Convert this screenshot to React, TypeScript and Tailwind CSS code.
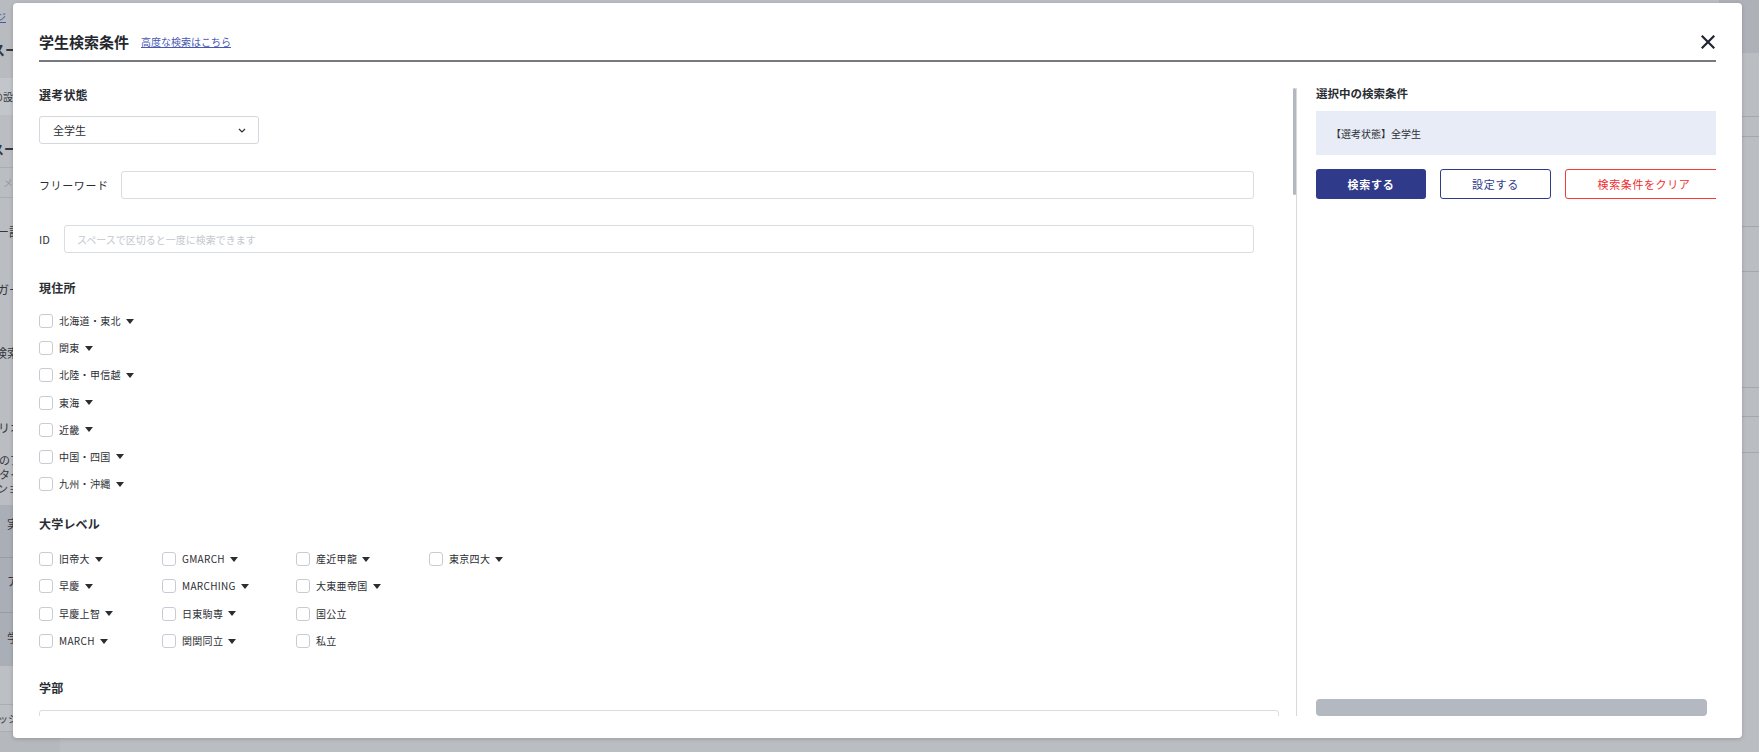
import React from 'react';

const regions = ['北海道・東北', '関東', '北陸・甲信越', '東海', '近畿', '中国・四国', '九州・沖縄'];

const levels: { label: string; caret: boolean }[][] = [
    [
        { label: '旧帝大', caret: true },
        { label: 'GMARCH', caret: true },
        { label: '産近甲龍', caret: true },
        { label: '東京四大', caret: true },
    ],
    [
        { label: '早慶', caret: true },
        { label: 'MARCHING', caret: true },
        { label: '大東亜帝国', caret: true },
    ],
    [
        { label: '早慶上智', caret: true },
        { label: '日東駒専', caret: true },
        { label: '国公立', caret: false },
    ],
    [
        { label: 'MARCH', caret: true },
        { label: '関関同立', caret: true },
        { label: '私立', caret: false },
    ],
];

function Caret() {
    return (
        <svg width="8" height="5" viewBox="0 0 8 5" className="ml-[5px] fill-[#2b2e33]">
            <path d="M0 0h8L4 5z" />
        </svg>
    );
}

function Check({ label, caret = true }: { label: string; caret?: boolean }) {
    return (
        <div className="flex h-[14px] items-center">
            <span className="h-[14px] w-[14px] rounded-[3px] border border-[#c8ccd2] bg-white" />
            <span className="ml-[6px] text-[10px] leading-none tracking-[0.3px] text-[#2b2e33]">{label}</span>
            {caret && <Caret />}
        </div>
    );
}

function SectionLabel({ children, className = '' }: { children: React.ReactNode; className?: string }) {
    return (
        <p className={`h-[14px] text-[12px] leading-[14px] font-semibold tracking-[0.2px] text-[#2a2d33] ${className}`}>
            {children}
        </p>
    );
}

function PageBehind() {
    return (
        <div className="flex h-[752px] w-[1759px] overflow-hidden bg-[#babdc2] text-[#34373d]">
            <div className="flex w-[60px] flex-col overflow-hidden whitespace-nowrap">
                <div className="flex h-[78px] flex-col bg-[#b8bbc0]">
                    <span className="mt-[10px] -ml-[4px] text-[10px] leading-[14px] text-[#4b5a9a] underline">ジ</span>
                    <span className="mt-[16px] -ml-[9px] text-[14px] leading-[18px] font-bold">スー</span>
                </div>
                <div className="flex h-[37px] items-center bg-[#c2c5c9]">
                    <span className="-ml-[7px] text-[10px]">の設定</span>
                </div>
                <div className="flex h-[53px] items-end border-b border-[#a9adb4] pb-[9px]">
                    <span className="-ml-[9px] text-[13px] leading-[18px] font-bold">スー</span>
                </div>
                <div className="flex h-[30px] items-center border-b border-[#a9adb4]">
                    <span className="ml-[3px] text-[10px] text-[#979ba3]">メー</span>
                </div>
                <div className="flex h-[307px] flex-col text-[12px] leading-[14px]">
                    <span className="mt-[27px] -ml-[3px]">ー設</span>
                    <span className="mt-[44px] -ml-[3px]">ガー</span>
                    <span className="mt-[49px] -ml-[5px]">検索</span>
                    <span className="mt-[61px] -ml-[2px]">リオ</span>
                    <span className="mt-[18px] -ml-[1px] text-[11px]">のア</span>
                    <span className="-ml-[1px] text-[11px]">タイ</span>
                    <span className="-ml-[3px] text-[11px]">ンョ</span>
                </div>
                <div className="flex h-[53px] border-b border-[#979ca5] bg-[#aaaeb6] pt-[10px] text-[12px]">
                    <span className="ml-[7px]">実</span>
                </div>
                <div className="flex h-[55px] border-b border-[#979ca5] bg-[#aaaeb6] pt-[14px] text-[12px]">
                    <span className="ml-[7px]">ア</span>
                </div>
                <div className="flex h-[53px] bg-[#aaaeb6] pt-[16px] text-[12px]">
                    <span className="ml-[7px]">学</span>
                </div>
                <div className="h-[39px] border-b border-[#a9adb4] bg-[#bcbfc4]" />
                <div className="flex h-[27px] items-center border-b border-[#a9adb4] bg-[#bcbfc4]">
                    <span className="-ml-[2px] text-[10px]">ッシ</span>
                </div>
                <div className="flex-1 bg-[#b5b8bd]" />
            </div>
            <div className="flex-1" />
            <div className="flex w-[40px] flex-col">
                <div className="h-[53px] bg-[#aeb1b7]" />
                <div className="h-[64px] border-b border-[#a3a7ae]" />
                <div className="h-[20px] border-b border-[#a3a7ae]" />
                <div className="h-[90px] border-b border-[#a3a7ae]" />
                <div className="h-[45px] border-b border-[#a3a7ae]" />
                <div className="h-[116px] border-b border-[#a3a7ae]" />
                <div className="h-[29px] border-b border-[#a3a7ae]" />
                <div className="h-[36px] border-b border-[#a3a7ae]" />
                <div className="flex-1" />
            </div>
        </div>
    );
}

export default function App() {
    return (
        <div className="relative h-[752px] w-[1759px] overflow-hidden font-['Noto_Sans_CJK_JP','Noto_Sans',sans-serif]">
            <PageBehind />

            <div className="absolute top-[3px] left-[13px] flex h-[735px] w-[1729px] flex-col rounded-[4px] bg-white px-[26px] shadow-[0_1px_4px_rgba(0,0,0,0.18)]">
                <header className="border-b-2 border-[#76797f] pt-[30px] pb-[9px]">
                    <div className="flex h-[18px] items-center">
                        <h1 className="text-[15px] leading-[18px] font-bold text-[#24272d]">学生検索条件</h1>
                        <a href="#" className="ml-[12px] text-[10px] leading-[14px] text-[#4658b3] underline">
                            高度な検索はこちら
                        </a>
                        <button className="mr-[1px] ml-auto text-[#1f2530]" aria-label="close">
                            <svg width="14" height="14" viewBox="0 0 14 14" fill="none" stroke="currentColor" strokeWidth="2.2" strokeLinecap="square">
                                <path d="M1.5 1.5l11 11M12.5 1.5l-11 11" />
                            </svg>
                        </button>
                    </div>
                </header>

                <div className="flex h-[654px]">
                    <section className="flex pt-[26px]">
                        <div className="w-[1253px] overflow-hidden">
                            <SectionLabel>選考状態</SectionLabel>
                            <div className="mt-[14px] flex h-[28px] w-[220px] items-center justify-between rounded-[3px] border border-[#d5d8dd] pr-[12px] pl-[13px]">
                                <span className="text-[11px] text-[#2b2e33]">全学生</span>
                                <svg width="8" height="5" viewBox="0 0 8 5" fill="none" stroke="#2b2e33" strokeWidth="1.2">
                                    <path d="M1 1l3 3 3-3" />
                                </svg>
                            </div>

                            <div className="mt-[27px] flex h-[28px] w-[1215px] items-center">
                                <span className="w-[82px] text-[11px] tracking-[0.6px] text-[#2b2e33]">フリーワード</span>
                                <div className="h-[28px] flex-1 rounded-[3px] border border-[#d9dce1]" />
                            </div>

                            <div className="mt-[26px] flex h-[28px] w-[1215px] items-center">
                                <span className="w-[25px] text-[11px] text-[#2b2e33]">ID</span>
                                <div className="flex h-[28px] flex-1 items-center rounded-[3px] border border-[#d9dce1] pl-[12px]">
                                    <span className="text-[10px] text-[#c3c7cd]">スペースで区切ると一度に検索できます</span>
                                </div>
                            </div>

                            <SectionLabel className="mt-[28px]">現住所</SectionLabel>
                            <div className="mt-[19px] flex flex-col gap-[13.2px]">
                                {regions.map((r) => (
                                    <Check key={r} label={r} />
                                ))}
                            </div>

                            <SectionLabel className="mt-[26px]">大学レベル</SectionLabel>
                            <div className="mt-[21px] flex flex-col gap-[13.3px]">
                                {levels.map((row, i) => (
                                    <div key={i} className="grid grid-cols-[123px_134px_133px_120px]">
                                        {row.map((c) => (
                                            <Check key={c.label} label={c.label} caret={c.caret} />
                                        ))}
                                    </div>
                                ))}
                            </div>

                            <SectionLabel className="mt-[33px]">学部</SectionLabel>
                            <div className="mt-[15px] h-[36px] w-[1240px] rounded-[3px] border border-[#d9dce1]" />
                        </div>
                        <div className="w-[5px] border-r border-[#d6d9de]">
                            <div className="ml-[1px] h-[107px] w-[3px] rounded-full bg-[#b3b8c0]" />
                        </div>
                    </section>

                    <aside className="ml-[19px] flex w-[400px] flex-col overflow-hidden pt-[24px]">
                        <p className="h-[14px] text-[11.5px] leading-[14px] font-semibold text-[#2a2d33]">選択中の検索条件</p>
                        <div className="mt-[11px] flex h-[44px] w-[400px] shrink-0 items-center bg-[#e8ecf6] pl-[15px]">
                            <span className="text-[10px] text-[#2b2e33]">【選考状態】全学生</span>
                        </div>
                        <div className="mt-[14px] flex h-[30px] w-[407px] shrink-0 gap-[14px]">
                            <button className="h-[30px] w-[110px] shrink-0 rounded-[3px] bg-[#2f3b8a] text-[11px] font-semibold tracking-[0.8px] text-white">
                                検索する
                            </button>
                            <button className="h-[30px] w-[111px] shrink-0 rounded-[3px] border border-[#2f3b8a] text-[11px] tracking-[0.8px] text-[#2f3b8a]">
                                設定する
                            </button>
                            <button className="h-[30px] w-[158px] shrink-0 rounded-[3px] border border-[#f23a3a] text-[11px] tracking-[0.6px] text-[#f02f2f]">
                                検索条件をクリア
                            </button>
                        </div>
                        <div className="flex-1" />
                        <div className="h-[17px] w-[391px] shrink-0 rounded-[4px] bg-[#b3b8c1]" />
                    </aside>
                </div>
            </div>
        </div>
    );
}
